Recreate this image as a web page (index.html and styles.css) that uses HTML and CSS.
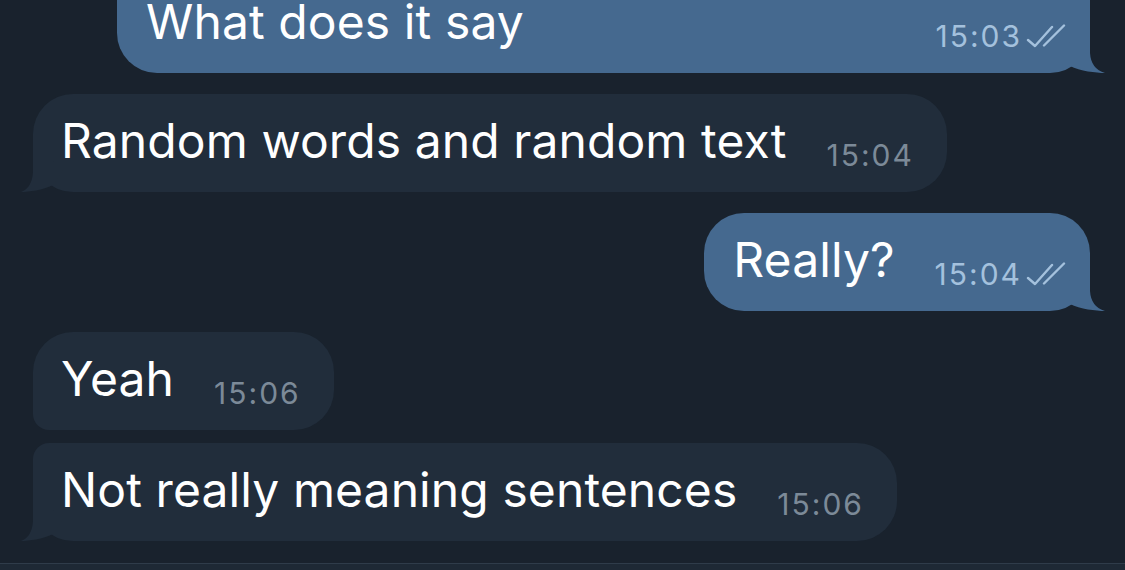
FILE: index.html
```html
<!DOCTYPE html>
<html lang="en">
<head>
<meta charset="utf-8">
<title>Chat</title>
<link rel="stylesheet" href="styles.css">
</head>
<body>
<div class="screen">
  <div class="chat">
    <div class="group out">
      <div class="bubble bubble-out bubble-long">
        <span class="text">What does it say</span>
        <span class="meta">15:03<svg class="checks" viewBox="0 0 44 24" width="44" height="24"><path d="M4 16 L11 22 L28 3 M20 21.5 L40 1.5"/></svg></span>
        <svg class="tail tail-out" viewBox="0 0 46 42" width="46" height="42"><path d="M20 2 L30 2 L30 22 Q31 38 45 42 C36 42 20 40 10 35 L0 20 Z"/></svg>
      </div>
    </div>
    <div class="group in">
      <div class="bubble bubble-in">
        <span class="text">Random words and random text</span>
        <span class="meta">15:04</span>
        <svg class="tail tail-in" viewBox="0 0 42 42" width="42" height="42"><path d="M22 2 L12 2 L12 22 Q11 38 0 42 C8 42 22 40 32 35 L42 20 Z"/></svg>
      </div>
    </div>
    <div class="group out">
      <div class="bubble bubble-out">
        <span class="text">Really?</span>
        <span class="meta">15:04<svg class="checks" viewBox="0 0 44 24" width="44" height="24"><path d="M4 16 L11 22 L28 3 M20 21.5 L40 1.5"/></svg></span>
        <svg class="tail tail-out" viewBox="0 0 46 42" width="46" height="42"><path d="M20 2 L30 2 L30 22 Q31 38 45 42 C36 42 20 40 10 35 L0 20 Z"/></svg>
      </div>
    </div>
    <div class="group in">
      <div class="bubble bubble-in grouped-top">
        <span class="text">Yeah</span>
        <span class="meta">15:06</span>
      </div>
      <div class="bubble bubble-in grouped-bottom">
        <span class="text">Not really meaning sentences</span>
        <span class="meta">15:06</span>
        <svg class="tail tail-in" viewBox="0 0 42 42" width="42" height="42"><path d="M22 2 L12 2 L12 22 Q11 38 0 42 C8 42 22 40 32 35 L42 20 Z"/></svg>
      </div>
    </div>
  </div>
  <div class="composer"></div>
</div>
</body>
</html>
```

FILE: styles.css
```css
* { box-sizing: border-box; }

html, body {
  margin: 0;
  padding: 0;
  background: #19222d;
}

body {
  font-family: Inter, "Noto Sans", "Liberation Sans", sans-serif;
  color: #ffffff;
}

.screen {
  width: 1125px;
  height: 570px;
  display: flex;
  flex-direction: column;
  background: #19222d;
}

.chat {
  height: 563px;
  overflow: hidden;
  display: flex;
  flex-direction: column;
  justify-content: flex-end;
  gap: 21px;
  padding: 0 35px 22px 33px;
}

.group {
  display: flex;
  flex-direction: column;
  gap: 13px;
}

.group.out { align-items: flex-end; }
.group.in { align-items: flex-start; }

.bubble {
  position: relative;
  display: flex;
  align-items: flex-end;
  padding: 18px 33px 22px 28px;
  border-radius: 40px;
}

.bubble-in {
  background: #212d3b;
}

.bubble-out {
  background: #45698f;
  padding-right: 22px;
  padding-left: 29px;
}

.bubble-long {
  width: 973px;
  padding-top: 100px;
}

.bubble-long .meta {
  margin-left: auto;
}

.grouped-top { border-bottom-left-radius: 16px; }
.grouped-bottom { border-top-left-radius: 16px; }

.text {
  font-size: 48px;
  line-height: 58px;
  white-space: nowrap;
  letter-spacing: 0.1px;
}

.meta {
  display: flex;
  align-items: flex-end;
  font-size: 30px;
  line-height: 30px;
  letter-spacing: 2px;
  margin-left: 40px;
  white-space: nowrap;
  color: #7c8a98;
}

.bubble-out .meta {
  color: #a4c1dd;
}

.checks {
  margin-left: 2px;
  margin-bottom: 3px;
  fill: none;
  stroke: #a4c1dd;
  stroke-width: 2.4;
  stroke-linecap: round;
  stroke-linejoin: round;
}

.tail {
  position: absolute;
  bottom: 0;
}

.tail-out {
  right: -16px;
  fill: #45698f;
}

.tail-in {
  left: -12px;
  fill: #212d3b;
}

.composer {
  height: 7px;
  background: #1e2935;
  border-top: 1px solid #2f3c4a;
}
```
